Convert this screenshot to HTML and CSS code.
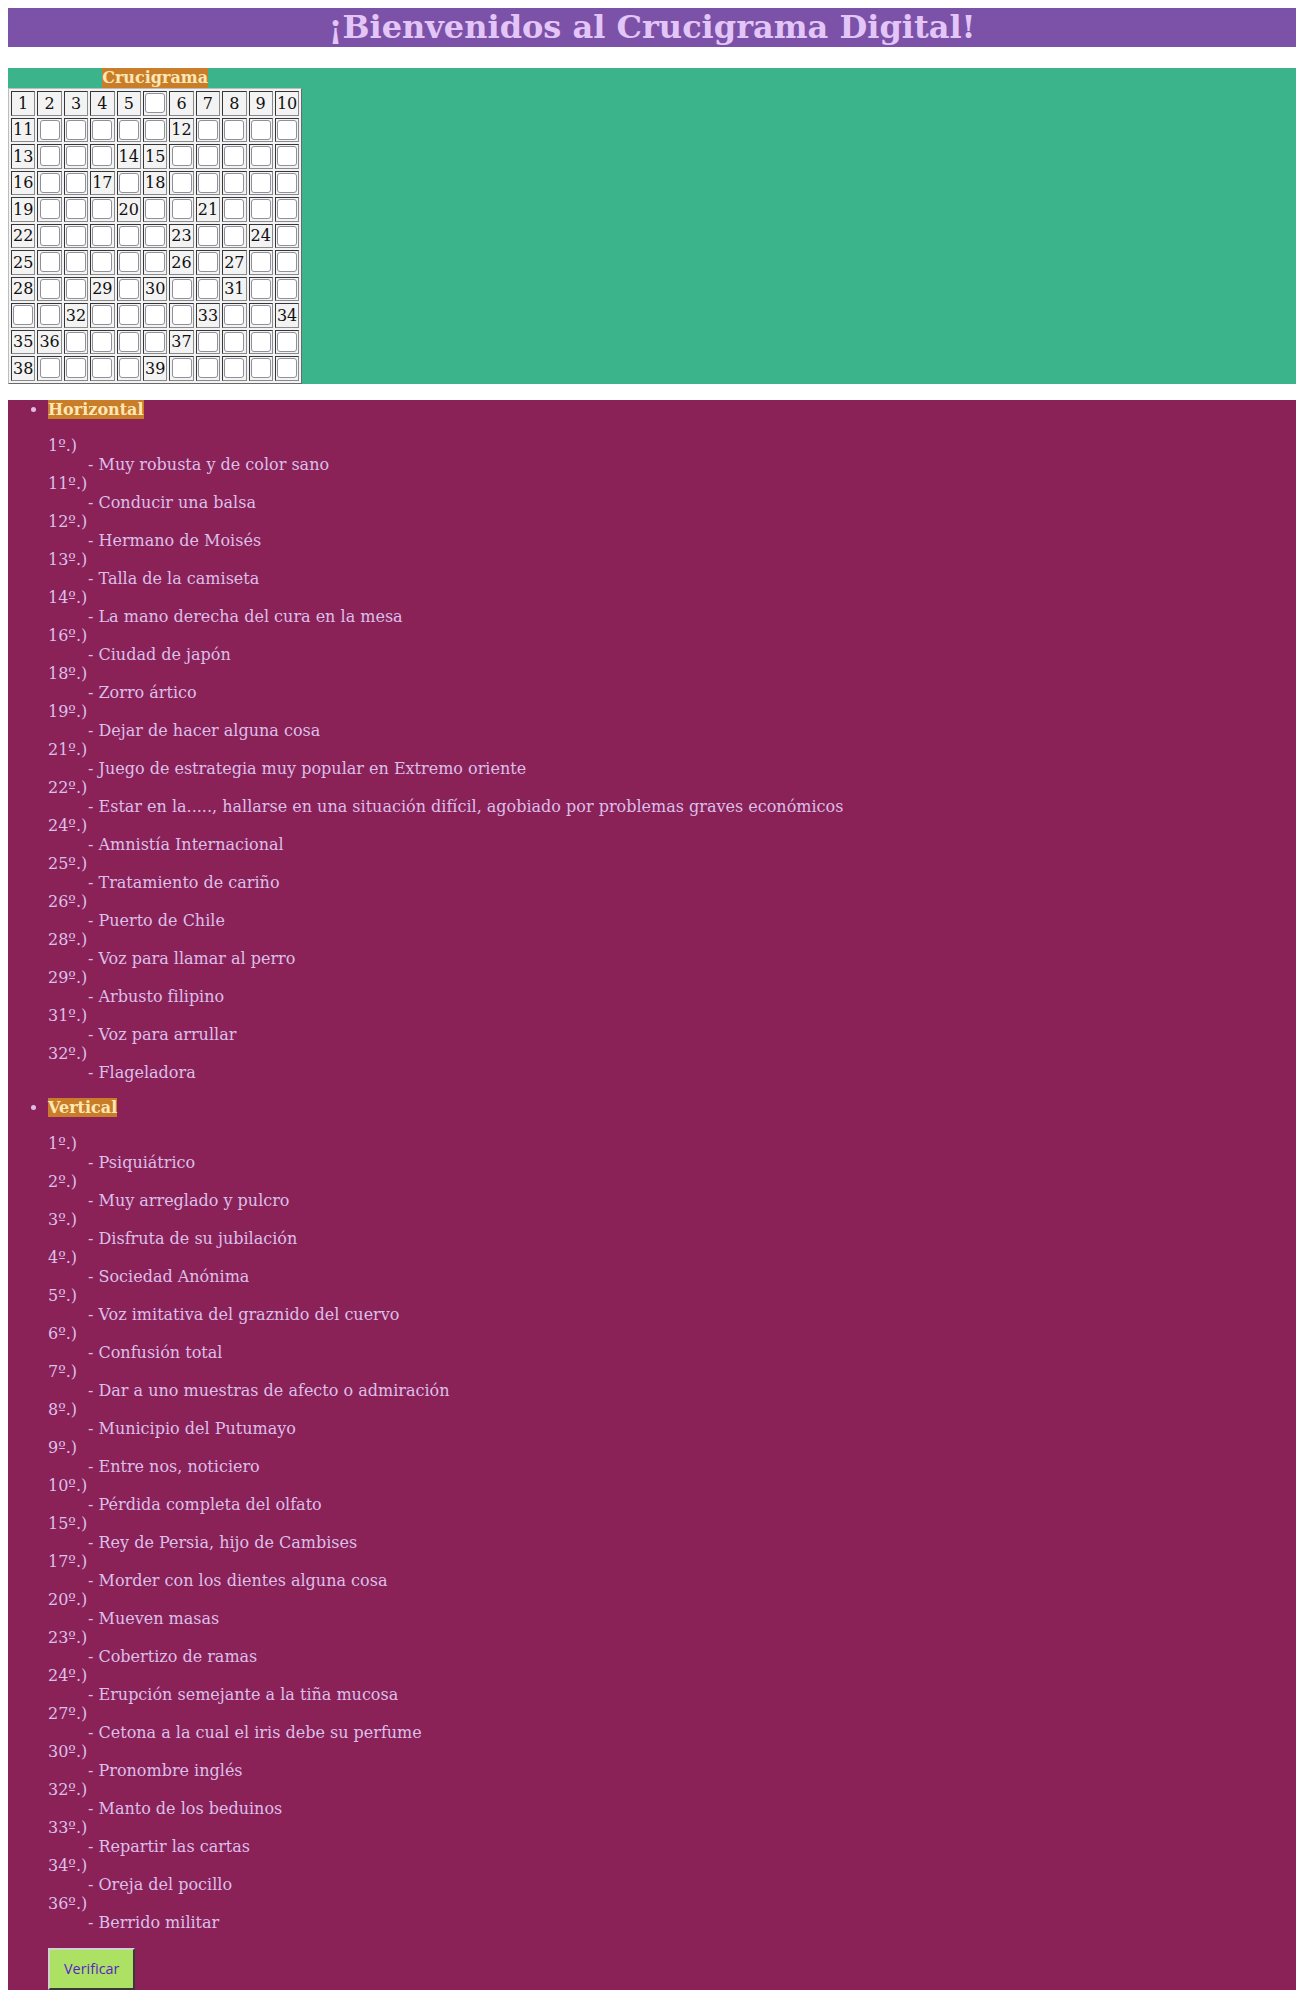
FILE: index.html
```html
<!DOCTYPE html>
<html lang="es">
<head>
<meta charset="utf-8">
<title>Crucigrama Digital</title>
<link rel="stylesheet" href="styles.css">
</head>
<body>
<h1 class="title">¡Bienvenidos al Crucigrama Digital!</h1>

<section class="board">
  <table class="grid">
    <caption class="label">Crucigrama</caption>
    <tr><td class="num">1</td><td class="num">2</td><td class="num">3</td><td class="num">4</td><td class="num">5</td><td><input></td><td class="num">6</td><td class="num">7</td><td class="num">8</td><td class="num">9</td><td class="num">10</td></tr>
    <tr><td class="num">11</td><td><input></td><td><input></td><td><input></td><td><input></td><td><input></td><td class="num">12</td><td><input></td><td><input></td><td><input></td><td><input></td></tr>
    <tr><td class="num">13</td><td><input></td><td><input></td><td><input></td><td class="num">14</td><td class="num">15</td><td><input></td><td><input></td><td><input></td><td><input></td><td><input></td></tr>
    <tr><td class="num">16</td><td><input></td><td><input></td><td class="num">17</td><td><input></td><td class="num">18</td><td><input></td><td><input></td><td><input></td><td><input></td><td><input></td></tr>
    <tr><td class="num">19</td><td><input></td><td><input></td><td><input></td><td class="num">20</td><td><input></td><td><input></td><td class="num">21</td><td><input></td><td><input></td><td><input></td></tr>
    <tr><td class="num">22</td><td><input></td><td><input></td><td><input></td><td><input></td><td><input></td><td class="num">23</td><td><input></td><td><input></td><td class="num">24</td><td><input></td></tr>
    <tr><td class="num">25</td><td><input></td><td><input></td><td><input></td><td><input></td><td><input></td><td class="num">26</td><td><input></td><td class="num">27</td><td><input></td><td><input></td></tr>
    <tr><td class="num">28</td><td><input></td><td><input></td><td class="num">29</td><td><input></td><td class="num">30</td><td><input></td><td><input></td><td class="num">31</td><td><input></td><td><input></td></tr>
    <tr><td><input></td><td><input></td><td class="num">32</td><td><input></td><td><input></td><td><input></td><td><input></td><td class="num">33</td><td><input></td><td><input></td><td class="num">34</td></tr>
    <tr><td class="num">35</td><td class="num">36</td><td><input></td><td><input></td><td><input></td><td><input></td><td class="num">37</td><td><input></td><td><input></td><td><input></td><td><input></td></tr>
    <tr><td class="num">38</td><td><input></td><td><input></td><td><input></td><td><input></td><td class="num">39</td><td><input></td><td><input></td><td><input></td><td><input></td><td><input></td></tr>
  </table>
</section>

<section class="clues">
  <ul class="clue-groups">
    <li>
      <span class="label">Horizontal</span>
      <dl class="clue-list">
        <dt>1º.)</dt><dd>- Muy robusta y de color sano</dd>
        <dt>11º.)</dt><dd>- Conducir una balsa</dd>
        <dt>12º.)</dt><dd>- Hermano de Moisés</dd>
        <dt>13º.)</dt><dd>- Talla de la camiseta</dd>
        <dt>14º.)</dt><dd>- La mano derecha del cura en la mesa</dd>
        <dt>16º.)</dt><dd>- Ciudad de japón</dd>
        <dt>18º.)</dt><dd>- Zorro ártico</dd>
        <dt>19º.)</dt><dd>- Dejar de hacer alguna cosa</dd>
        <dt>21º.)</dt><dd>- Juego de estrategia muy popular en Extremo oriente</dd>
        <dt>22º.)</dt><dd>- Estar en la....., hallarse en una situación difícil, agobiado por problemas graves económicos</dd>
        <dt>24º.)</dt><dd>- Amnistía Internacional</dd>
        <dt>25º.)</dt><dd>- Tratamiento de cariño</dd>
        <dt>26º.)</dt><dd>- Puerto de Chile</dd>
        <dt>28º.)</dt><dd>- Voz para llamar al perro</dd>
        <dt>29º.)</dt><dd>- Arbusto filipino</dd>
        <dt>31º.)</dt><dd>- Voz para arrullar</dd>
        <dt>32º.)</dt><dd>- Flageladora</dd>
      </dl>
    </li>
    <li>
      <span class="label">Vertical</span>
      <dl class="clue-list">
        <dt>1º.)</dt><dd>- Psiquiátrico</dd>
        <dt>2º.)</dt><dd>- Muy arreglado y pulcro</dd>
        <dt>3º.)</dt><dd>- Disfruta de su jubilación</dd>
        <dt>4º.)</dt><dd>- Sociedad Anónima</dd>
        <dt>5º.)</dt><dd>- Voz imitativa del graznido del cuervo</dd>
        <dt>6º.)</dt><dd>- Confusión total</dd>
        <dt>7º.)</dt><dd>- Dar a uno muestras de afecto o admiración</dd>
        <dt>8º.)</dt><dd>- Municipio del Putumayo</dd>
        <dt>9º.)</dt><dd>- Entre nos, noticiero</dd>
        <dt>10º.)</dt><dd>- Pérdida completa del olfato</dd>
        <dt>15º.)</dt><dd>- Rey de Persia, hijo de Cambises</dd>
        <dt>17º.)</dt><dd>- Morder con los dientes alguna cosa</dd>
        <dt>20º.)</dt><dd>- Mueven masas</dd>
        <dt>23º.)</dt><dd>- Cobertizo de ramas</dd>
        <dt>24º.)</dt><dd>- Erupción semejante a la tiña mucosa</dd>
        <dt>27º.)</dt><dd>- Cetona a la cual el iris debe su perfume</dd>
        <dt>30º.)</dt><dd>- Pronombre inglés</dd>
        <dt>32º.)</dt><dd>- Manto de los beduinos</dd>
        <dt>33º.)</dt><dd>- Repartir las cartas</dd>
        <dt>34º.)</dt><dd>- Oreja del pocillo</dd>
        <dt>36º.)</dt><dd>- Berrido militar</dd>
      </dl>
    </li>
  </ul>
  <button class="verify" type="button">Verificar</button>
</section>
</body>
</html>
```

FILE: styles.css
```css
html {
  background: #ffffff;
}

body {
  margin: 8px;
  font-family: "DejaVu Serif", serif;
  font-size: 16px;
}

.title {
  margin: 0 0 21px;
  background: #7c52a8;
  color: #e3c6f7;
  font-size: 32px;
  line-height: 39px;
  font-weight: bold;
  text-align: center;
}

.board {
  background: #3cb48b;
}

.label {
  background: #c97d29;
  color: #fde7b6;
  font-weight: bold;
  line-height: 20px;
}

.grid {
  border: 1px outset #bdbdbd;
  border-spacing: 2px;
  background: #f3f3f3;
}

.grid caption {
  display: table-caption;
  width: fit-content;
  margin: 0 auto;
  line-height: 20px;
}

.grid td {
  width: 20.4px;
  height: 20.5px;
  padding: 1px;
  border: 1px inset #8a8a8a;
  text-align: center;
  vertical-align: middle;
  color: #111;
  line-height: 19px;
}

.grid td.num {
  background: #f3f3f3;
}

.grid input {
  display: block;
  box-sizing: border-box;
  width: 20px;
  height: 20px;
  margin: 0 auto;
  padding: 0;
  border: 1px solid #8f8f9d;
  border-radius: 3px;
  background: #ffffff;
}

.clues {
  margin-top: 16px;
  background: #8a2258;
  color: #dcbfe9;
}

.clue-groups {
  margin: 0;
  padding-left: 40px;
}

.clue-list {
  margin: 16px 0;
}

.clue-list dd {
  margin-left: 40px;
}

.verify {
  display: block;
  margin: 0 0 0 40px;
  padding: 10px 14px;
  border: 2px outset #d0d0d0;
  border-right-color: #8c8c8c;
  border-bottom-color: #8c8c8c;
  background: #ade163;
  color: #5624c4;
  font-family: "Open Sans", sans-serif;
  font-size: 14.4px;
  line-height: 18px;
}
```
